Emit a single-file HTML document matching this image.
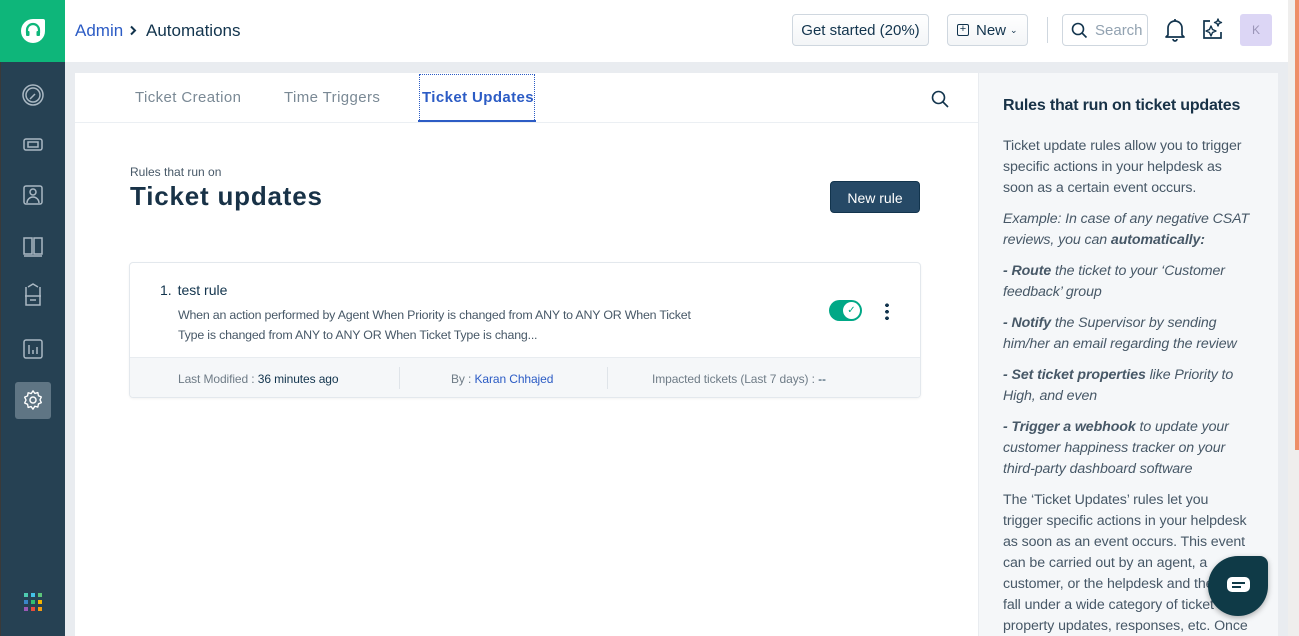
<!DOCTYPE html>
<html><head><meta charset="utf-8"><style>
*{box-sizing:border-box;margin:0;padding:0}
html,body{width:1299px;height:636px;overflow:hidden}
body{background:#efeeed;font-family:"Liberation Sans",sans-serif;position:relative}
.abs{position:absolute}
.side{left:0;top:0;width:65px;height:636px;background:#264153;border-left:1px solid #3a3a3a}
.logo{left:0;top:0;width:65px;height:62px;background:#0eb67a}
.hdr{left:65px;top:0;width:1223px;height:62px;background:#fff}
.bg{left:65px;top:62px;width:1223px;height:574px;background:#e9ecf0}
.btn{border:1px solid #cfd7df;border-radius:4px;background:linear-gradient(#fff,#f3f5f7);font-size:15px;color:#12344d;display:flex;align-items:center}
.main{left:75px;top:73px;width:903px;height:563px;background:#fff}
.rp{left:979px;top:73px;width:299px;height:563px;overflow:hidden;background:#f5f7f9;padding:22px 0 0 24px;color:#475867;font-size:14.2px;line-height:21px;white-space:nowrap;letter-spacing:-.1px}
.rp p{margin-bottom:10px}
.rp h3{font-size:16px;color:#183247;margin-bottom:19px;line-height:22px;letter-spacing:-.2px}
.tab{top:89px;font-size:15px;color:#7a8995;letter-spacing:.4px}
.ic{stroke:#aab8c3;fill:none;stroke-width:1.5}
</style></head><body>
<div class="abs side"></div>
<div class="abs logo"><svg class="abs" style="left:19px;top:17px" width="28" height="28" viewBox="0 0 28 28"><path d="M14 2H24a2 2 0 0 1 2 2V14A12 12 0 1 1 14 2z" fill="#fff"/><path d="M8 16v-3a6 6 0 0 1 12 0v3" stroke="#0eb67a" stroke-width="2.2" fill="none"/><rect x="7" y="14" width="3.5" height="5" rx="1" fill="#0eb67a"/><rect x="17.5" y="14" width="3.5" height="5" rx="1" fill="#0eb67a"/></svg></div>
<svg class="abs" style="left:20px;top:82px" width="26" height="340" viewBox="0 0 26 340">
<circle class="ic" cx="13" cy="13" r="10"/><circle class="ic" cx="13" cy="13" r="7"/><path class="ic" d="M10 17l5-5"/>
<rect class="ic" x="4" y="57" width="18" height="11" rx="2"/><rect class="ic" x="8" y="60" width="10" height="5"/>
<rect class="ic" x="4" y="104" width="18" height="18" rx="2"/><circle class="ic" cx="13" cy="110" r="3"/><path class="ic" d="M7 121a6 6 0 0 1 12 0"/>
<path class="ic" d="M4 156h8v16H4zM14 156h8v16h-8zM4 174h18"/>
<path class="ic" d="M6 205v18h14v-18M5 214h16M8 205l5-3 5 3M10 218h6"/>
<rect class="ic" x="4" y="258" width="18" height="18" rx="2"/><path class="ic" d="M9 263v9M13 268v4M17 265v7"/>
</svg>
<div class="abs" style="left:15px;top:382px;width:36px;height:37px;background:#5f7584;border-radius:3px"></div>
<svg class="abs" style="left:22px;top:389px" width="22" height="22" viewBox="0 0 24 24"><circle cx="12" cy="12" r="3.3" stroke="#fff" fill="none" stroke-width="1.6"/><path d="M12 2l2 2.8 3.3-.9.6 3.4 3.2 1.4-1.5 3.1 1.5 3.1-3.2 1.4-.6 3.4-3.3-.9L12 22l-2-2.8-3.3.9-.6-3.4-3.2-1.4L4.4 12 2.9 8.9l3.2-1.4.6-3.4 3.3.9z" stroke="#fff" fill="none" stroke-width="1.5" stroke-linejoin="round"/></svg>
<div class="abs" style="left:24px;top:593px;width:19px;height:19px">
<div class="abs" style="left:0;top:0;width:4px;height:4px;background:#4ecbb0"></div><div class="abs" style="left:7px;top:0;width:4px;height:4px;background:#43c2e8"></div><div class="abs" style="left:14px;top:0;width:4px;height:4px;background:#5cc47a"></div>
<div class="abs" style="left:0;top:7px;width:4px;height:4px;background:#3a85c9"></div><div class="abs" style="left:7px;top:7px;width:4px;height:4px;background:#2fbf71"></div><div class="abs" style="left:14px;top:7px;width:4px;height:4px;background:#f3b400"></div>
<div class="abs" style="left:0;top:14px;width:4px;height:4px;background:#9b59b6"></div><div class="abs" style="left:7px;top:14px;width:4px;height:4px;background:#e74c3c"></div><div class="abs" style="left:14px;top:14px;width:4px;height:4px;background:#f39c12"></div></div>
<div class="abs hdr"></div>
<div class="abs" style="left:75px;top:21px;font-size:17px;color:#2c5cc5">Admin</div>
<svg class="abs" style="left:129px;top:25px" width="8" height="11" viewBox="0 0 8 11"><path d="M2 1.5l4 4-4 4" stroke="#12344d" stroke-width="2" fill="none"/></svg>
<div class="abs" style="left:146px;top:21px;font-size:17px;color:#12344d">Automations</div>
<div class="abs btn" style="left:792px;top:14px;width:137px;height:32px;justify-content:center">Get started (20%)</div>
<div class="abs btn" style="left:947px;top:14px;width:81px;height:32px;padding-left:9px"><span style="display:inline-block;width:12px;height:12px;border:1.5px solid #12344d;border-radius:2px;font-size:11px;line-height:9px;text-align:center;margin-right:7px">+</span>New <span style="font-size:9px;margin-left:4px">&#8964;</span></div>
<div class="abs" style="left:1047px;top:17px;width:1px;height:26px;background:#cfd7df"></div>
<div class="abs btn" style="left:1062px;top:14px;width:86px;height:32px;background:#fff;color:#92a2b1;padding-left:8px"><svg width="17" height="17" viewBox="0 0 17 17" style="margin-right:7px"><circle cx="7" cy="7" r="5.5" stroke="#12344d" stroke-width="1.6" fill="none"/><path d="M11 11l4.5 4.5" stroke="#12344d" stroke-width="1.6"/></svg>Search</div>
<svg class="abs" style="left:1164px;top:17px" width="22" height="25" viewBox="0 0 22 25"><path d="M4 18V11a7 7 0 0 1 14 0v7l2 2H2z" stroke="#12344d" stroke-width="1.7" fill="none" stroke-linejoin="round"/><path d="M9 22a2 2 0 0 0 4 0" stroke="#12344d" stroke-width="1.7" fill="none"/><path d="M11 2v2" stroke="#12344d" stroke-width="1.7"/></svg>
<svg class="abs" style="left:1201px;top:17px" width="24" height="24" viewBox="0 0 24 24"><path d="M9 4H3v17h17v-6" stroke="#12344d" stroke-width="1.7" fill="none"/><path d="M10 9l1.5 3.5L15 14l-3.5 1.5L10 19l-1.5-3.5L5 14l3.5-1.5z M17 2l1 2.5 2.5 1-2.5 1L17 9l-1-2.5-2.5-1 2.5-1z" stroke="#12344d" stroke-width="1.4" fill="none" stroke-linejoin="round"/></svg>
<div class="abs" style="left:1240px;top:14px;width:32px;height:32px;background:#dcd6f5;border-radius:3px;color:#9b95b8;font-size:12px;text-align:center;line-height:32px">K</div>
<div class="abs bg"></div>
<div class="abs" style="left:1295px;top:0;width:4px;height:450px;background:#ee8e68"></div>
<div class="abs main"></div>
<div class="abs tab" style="left:135px">Ticket Creation</div>
<div class="abs tab" style="left:284px">Time Triggers</div>
<div class="abs" style="left:419px;top:74px;width:116px;height:46px;border:1px dotted #2c5cc5;border-bottom:none"></div>
<div class="abs tab" style="left:422px;color:#2c5cc5;font-weight:bold">Ticket Updates</div>
<div class="abs" style="left:418px;top:120px;width:118px;height:2px;background:#2c5cc5"></div>
<div class="abs" style="left:75px;top:122px;width:903px;height:1px;background:#ebeff3"></div>
<svg class="abs" style="left:931px;top:90px" width="18" height="18" viewBox="0 0 18 18"><circle cx="7.5" cy="7.5" r="6" stroke="#12344d" stroke-width="1.6" fill="none"/><path d="M12 12l5 5" stroke="#12344d" stroke-width="1.6"/></svg>
<div class="abs" style="left:130px;top:165px;font-size:12px;color:#475867">Rules that run on</div>
<div class="abs" style="left:130px;top:181px;font-size:26px;font-weight:bold;color:#183247;letter-spacing:.8px">Ticket updates</div>
<div class="abs" style="left:830px;top:181px;width:90px;height:32px;background:#264966;border-radius:4px;color:#fff;font-size:14px;text-align:center;line-height:32px;border:1px solid #12344d">New rule</div>
<div class="abs" style="left:129px;top:262px;width:792px;height:136px;border:1px solid #e3e8ed;border-radius:4px;overflow:hidden;box-shadow:0 1px 2px rgba(0,0,0,.05)">
<div class="abs" style="left:30px;top:19px;font-size:14px;color:#12344d">1. <span style="margin-left:2px">test rule</span></div>
<div class="abs" style="left:48px;top:42px;font-size:12.4px;line-height:20px;color:#475867;letter-spacing:-.2px;white-space:nowrap">When an action performed by Agent When Priority is changed from ANY to ANY OR When Ticket<br>Type is changed from ANY to ANY OR When Ticket Type is chang...</div>
<div class="abs" style="left:699px;top:37px;width:33px;height:21px;background:#00a886;border-radius:11px"><div class="abs" style="left:14px;top:2px;width:17px;height:17px;border-radius:50%;background:#fff;color:#00a886;font-size:10px;text-align:center;line-height:17px">✓</div></div>
<div class="abs" style="left:755px;top:39px;width:4px;height:18px;background:radial-gradient(circle,#12344d 1.8px,transparent 2px) 0 0/4px 6.5px"></div>
<div class="abs" style="left:0;top:94px;width:792px;height:42px;background:#f5f7f9;border-top:1px solid #e8ecf0;font-size:12px;color:#6f7c87;letter-spacing:-.1px">
<div class="abs" style="left:48px;top:14px">Last Modified : <span style="color:#12344d">36 minutes ago</span></div>
<div class="abs" style="left:269px;top:9px;width:1px;height:22px;background:#dfe4e9"></div>
<div class="abs" style="left:321px;top:14px">By : <span style="color:#2c5cc5">Karan Chhajed</span></div>
<div class="abs" style="left:477px;top:9px;width:1px;height:22px;background:#dfe4e9"></div>
<div class="abs" style="left:522px;top:14px">Impacted tickets (Last 7 days) : <span style="color:#12344d">--</span></div>
</div></div>
<div class="abs rp">
<h3>Rules that run on ticket updates</h3>
<p>Ticket update rules allow you to trigger<br>specific actions in your helpdesk as<br>soon as a certain event occurs.</p>
<p><i>Example: In case of any negative CSAT<br>reviews, you can <b>automatically:</b></i></p>
<p><i><b>- Route</b> the ticket to your ‘Customer<br>feedback’ group</i></p>
<p><i><b>- Notify</b> the Supervisor by sending<br>him/her an email regarding the review</i></p>
<p><i><b>- Set ticket properties</b> like Priority to<br>High, and even</i></p>
<p><i><b>- Trigger a webhook</b> to update your<br>customer happiness tracker on your<br>third-party dashboard software</i></p>
<p>The ‘Ticket Updates’ rules let you<br>trigger specific actions in your helpdesk<br>as soon as an event occurs. This event<br>can be carried out by an agent, a<br>customer, or the helpdesk and they<br>fall under a wide category of ticket<br>property updates, responses, etc. Once</p>
</div>
<div class="abs" style="left:1208px;top:556px;width:60px;height:60px;background:#0f3a47;border-radius:50% 8px 50% 50%;box-shadow:0 2px 6px rgba(0,0,0,.3)"><div class="abs" style="left:19px;top:21px;width:23px;height:15px;background:#fff;border-radius:5px"><div class="abs" style="left:5px;top:5px;width:13px;height:2px;background:#0f3a47"></div><div class="abs" style="left:5px;top:9px;width:9px;height:2px;background:#0f3a47"></div></div></div>
</body></html>
